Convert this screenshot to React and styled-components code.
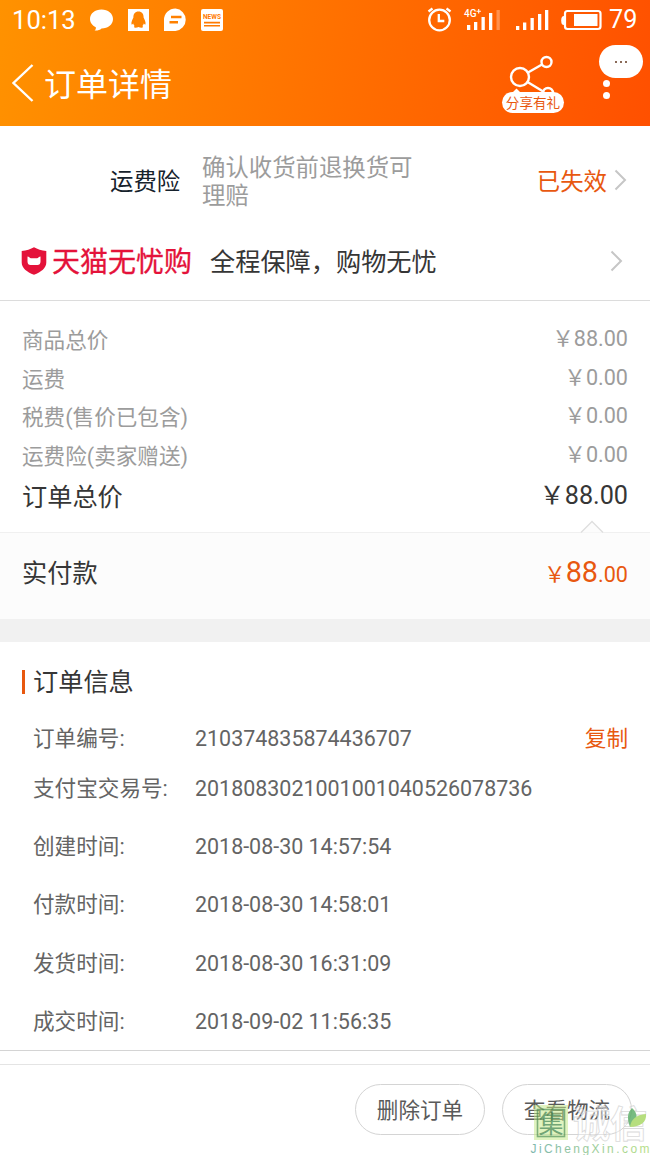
import React from "react"
import styled, {createGlobalStyle} from "styled-components"

const colors = {
	orange: "#e8580f",
	tmall: "#e4123a",
	dark: "#363636",
	text: "#646464",
	gray: "#9c9c9c",
	line: "#dcdcdc",
}

const prices = [
	{label: "商品总价", value: "￥88.00"},
	{label: "运费", value: "￥0.00"},
	{label: "税费(售价已包含)", value: "￥0.00"},
	{label: "运费险(卖家赠送)", value: "￥0.00"},
]

const orderInfo = [
	{label: "订单编号:", value: "210374835874436707", copy: true, height: 50},
	{label: "支付宝交易号:", value: "2018083021001001040526078736", height: 50, gap: 4},
	{label: "创建时间:", value: "2018-08-30 14:57:54"},
	{label: "付款时间:", value: "2018-08-30 14:58:01"},
	{label: "发货时间:", value: "2018-08-30 16:31:09"},
	{label: "成交时间:", value: "2018-09-02 11:56:35"},
]

const Chevron = () => (
	<svg width="13" height="22" viewBox="0 0 13 22" fill="none" stroke="#c6c6c6" strokeWidth="2">
		<path d="M1.500 1.500 11 11 1.500 20.500"/>
	</svg>
)

const NoticeIcons = () => (
	<svg width="136" height="26" viewBox="88 7 136 26" fill="#fff">
		<path d="M101.500 9.500c6.500 0 11.500 4 11.500 9.500s-5 9.500-11.500 9.500c-1.500 1.500-4 2.200-7 2 1.200-.8 1.600-2 1.300-3.300-3.500-1.600-5.800-4.700-5.800-8.200 0-5.500 5-9.500 11.500-9.500z"/>
		<path fillRule="evenodd" d="M128 9h21v22h-21zM138.500 11.500c-3.500 0-5.200 2.500-5.100 6-.8 2-2.400 4.400-1.900 7 .6.200 1.300-.3 1.700-1 .2 1 .7 1.800 1.400 2.500-1 .7-.6 1.800.8 1.800 1.200 0 2.300-.2 3.100-.8.800.6 1.900.8 3.100.8 1.400 0 1.800-1.100.8-1.800.7-.7 1.200-1.500 1.400-2.500.4.700 1.100 1.200 1.700 1 .5-2.600-1.100-5-1.900-7 .1-3.500-1.600-6-5.100-6z"/>
		<path fillRule="evenodd" d="M175.500 8.500A11.300 11.300 0 0 1 175.500 31H164V20A11.400 11.400 0 0 1 175.500 8.500zM171 15.700v2.600h10.500v-2.600zM169.500 21v2.600h8.500V21z"/>
		<rect x="201" y="9" width="22" height="22" rx="2"/>
		<path d="M204 21.800h16v1.600h-16zM204 25h16v1.600h-16z" fill="#ff7a00"/>
		<text x="212" y="18.500" textAnchor="middle" fontFamily="Roboto, sans-serif" fontSize="6.500" fontWeight="700" textLength="18" fill="#ff7a00">NEWS</text>
	</svg>
)

const DeviceIcons = () => (
	<svg width="178" height="28" viewBox="426 6 178 28" fill="#fff">
		<g fill="none" stroke="#fff" strokeWidth="2.300">
			<circle cx="439.500" cy="20" r="10.300"/>
			<path d="M438.800 14v7h5.500M428.500 11.500l4-3M450.500 11.500l-4-3"/>
		</g>
		<text x="464" y="17" fontFamily="Roboto, sans-serif" fontSize="10" fontWeight="500">4G</text>
		<path d="M478.700 9v4.400M476.500 11.200h4.400" stroke="#fff" strokeWidth="1.100"/>
		<path d="M467 25h3.300v5H467zM474 22h3.300v8H474zM481.500 17h3.300v13h-3.300zM489 13h3.300v17H489z"/>
		<path d="M496.500 10h3.300v20h-3.300z" opacity=".3"/>
		<path d="M516 26h3.300v4H516zM523 22.500h3.300v7.500H523zM530.500 18h3.300v12h-3.300zM538 14h3.300v16H538zM545 10h3.300v20H545z"/>
		<rect x="565" y="11" width="35.500" height="18" rx="2.500" fill="none" stroke="#fff" strokeWidth="2.200"/>
		<rect x="574" y="14" width="23.500" height="12"/>
		<path d="M564 16v9c-2 0-2.800-1.500-2.800-4.500S562 16 564 16z"/>
	</svg>
)

const ShareIcon = () => (
	<svg width="50" height="44" viewBox="505 52 50 44" fill="none" stroke="#fff" strokeWidth="2.400">
		<circle cx="520" cy="77" r="9"/>
		<circle cx="546.500" cy="62" r="5"/>
		<circle cx="548" cy="93" r="5"/>
		<path d="M528 72.500 542 64.500M527.500 82 544 92"/>
		<path d="M511 94 516.500 88.500 522 94z" fill="#fff" stroke="none"/>
	</svg>
)

const Shield = () => (
	<svg width="26" height="28" viewBox="0 0 26 28">
		<path d="M13 .3c3.400 2 7.500 3.200 12.300 3.600V15.500c0 5.500-5 9.500-12.300 12.200C5.700 25 .7 21 .7 15.500V3.900C5.500 3.500 9.600 2.300 13 .3z" fill={colors.tmall}/>
		<path d="M6.500 9.500c1.500 0 2.200 1.700 3.500 1.700h6c1.300 0 2-1.700 3.500-1.700v5c0 2.500-1.300 3.500-3 3.500h-7c-1.700 0-3-1-3-3.500z" fill="#fff"/>
	</svg>
)

const Watermark = () => (
	<Mark>
		<svg width="122" height="56" viewBox="528 1099 122 56">
			<defs>
				<linearGradient id="site" x1="0" x2="1">
					<stop offset="0" stopColor="#5fa79a"/>
					<stop offset="1" stopColor="#a5d86c"/>
				</linearGradient>
			</defs>
			<rect x="534" y="1105" width="34" height="35" fill="#c5ea86" opacity=".65"/>
			<rect x="537.500" y="1109.500" width="27" height="27" fill="none" stroke="#5f9c58" strokeWidth="1.600"/>
			<text x="551" y="1132.500" textAnchor="middle" fontFamily="'Noto Sans CJK SC', sans-serif" fontSize="25" fill="#4f8f55">集</text>
			<text x="573" y="1138" fontFamily="'Noto Sans CJK SC', sans-serif" fontSize="37" fontWeight="700" fill="#fff" fillOpacity=".5" stroke="#d2d2d2" strokeWidth=".8">诚信</text>
			<path d="M630 1127c-3-8-3-14 2-19 6 5 7 13-2 19z" fill="#56ab62"/>
			<path d="M630 1127c1-8 6-12 16-13 1 8-6 13-16 13z" fill="#a4d65e"/>
			<text x="530.500" y="1153" fontFamily="'Liberation Sans', sans-serif" fontSize="12" textLength="119" fill="url(#site)">JiChengXin.com</text>
		</svg>
	</Mark>
)

const App = () => (
	<Page>
		<GlobalStyle/>
		<Header>
			<StatusBar>
				<Clock>10:13</Clock>
				<NoticeIcons/>
				<Spacer/>
				<DeviceIcons/>
				<Battery>79</Battery>
			</StatusBar>
			<NavBar>
				<svg width="22" height="40" viewBox="0 0 22 40" fill="none" stroke="#fff" strokeWidth="2.400">
					<path d="M20.500 2 1.500 20 20.500 38"/>
				</svg>
				<Title>订单详情</Title>
				<Share>
					<ShareIcon/>
					<ShareLabel>分享有礼</ShareLabel>
				</Share>
				<More>
					<Bubble><i/><i/><i/></Bubble>
					<Dot/>
					<Dot/>
				</More>
			</NavBar>
		</Header>

		<Insurance>
			<InsuranceName>运费险</InsuranceName>
			<InsuranceNote>确认收货前退换货可理赔</InsuranceNote>
			<Expired>已失效</Expired>
			<Chevron/>
		</Insurance>
		<Guarantee>
			<Shield/>
			<Brand>天猫无忧购</Brand>
			<Slogan>全程保障，购物无忧</Slogan>
			<Chevron/>
		</Guarantee>

		<Prices>
			{prices.map(({label, value}) =>
				<PriceRow key={label}>
					<span>{label}</span>
					<Amount>{value}</Amount>
				</PriceRow>
			)}
			<TotalRow>
				<span>订单总价</span>
				<Amount>￥88.00</Amount>
			</TotalRow>
			<Notch width="24" height="13" viewBox="0 0 24 13">
				<path d="M1 12.500 12 1.500 23 12.500" fill="#fcfcfc" stroke="#dedede" strokeWidth="1.300"/>
			</Notch>
		</Prices>
		<Paid>
			<span>实付款</span>
			<PaidAmount>￥<b>88</b>.00</PaidAmount>
		</Paid>

		<Info>
			<InfoTitle>订单信息</InfoTitle>
			{orderInfo.map(({label, value, copy, height, gap}) =>
				<InfoRow key={label} $height={height} $gap={gap}>
					<InfoLabel>{label}</InfoLabel>
					<InfoValue>{value}</InfoValue>
					{copy && <Copy>复制</Copy>}
				</InfoRow>
			)}
		</Info>

		<Footer>
			<Button>删除订单</Button>
			<Button>查看物流</Button>
			<Watermark/>
		</Footer>
	</Page>
)
export default App

const GlobalStyle = createGlobalStyle`
	* {
		box-sizing: border-box;
	}

	body {
		margin: 0;
		background: #fff;
		font-family: Roboto, "Noto Sans CJK SC", sans-serif;
	}

	svg {
		display: block;
		flex: none;
	}
`
const Page = styled.div`
	display: flex;
	flex-direction: column;
	width: 650px;
	height: 1155px;
	overflow: hidden;
	color: ${colors.dark};
	font-size: 21.6px;
	line-height: 28px;
`
const Header = styled.header`
	flex: none;
	height: 126px;
	color: #fff;
	background: linear-gradient(100deg, #ff9200, #ff5000);
`
const StatusBar = styled.div`
	display: flex;
	align-items: center;
	height: 40px;
	padding: 0 13px 0 12px;
`
const Clock = styled.span`
	width: 76px;
	font-size: 25.6px;
`
const Spacer = styled.span`
	flex: 1;
`
const Battery = styled.span`
	width: 33px;
	padding-left: 5px;
	font-size: 25.2px;
`
const NavBar = styled.div`
	display: flex;
	align-items: center;
	height: 86px;
	padding: 0 7px 0 12px;
`
const Title = styled.h1`
	flex: 1;
	margin: 0 0 0 10px;
	padding-top: 4px;
	font-size: 32px;
	font-weight: 400;
`
const Share = styled.div`
	position: relative;
	width: 62px;
	height: 62px;
	margin-right: 35px;
	padding-left: 3px;
`
const ShareLabel = styled.span`
	position: absolute;
	left: 0;
	bottom: 1px;
	width: 62px;
	height: 21px;
	border-radius: 11px;
	background: #fff;
	color: ${colors.orange};
	font-size: 13.6px;
	line-height: 23px;
	text-align: center;
`
const More = styled.div`
	display: flex;
	flex-direction: column;
	align-items: flex-start;
	gap: 5px;
	height: 76px;
`
const Bubble = styled.div`
	display: flex;
	justify-content: center;
	align-items: center;
	gap: 3px;
	width: 44px;
	height: 33px;
	margin-bottom: -3px;
	border-radius: 17px;
	background: #fff;

	i {
		width: 2px;
		height: 2px;
		background: #8a6a58;
	}
`
const Dot = styled.i`
	width: 7px;
	height: 7px;
	margin-left: 4px;
	border-radius: 50%;
	background: #fff;
`
const Insurance = styled.section`
	display: flex;
	flex: none;
	align-items: center;
	height: 108px;
	padding: 0 23px 0 110px;
	font-size: 23.4px;
`
const InsuranceName = styled.span`
	width: 92px;
	padding-top: 3px;
	color: #16222c;
`
const InsuranceNote = styled.p`
	width: 216px;
	margin: 0 auto 0 0;
	padding-top: 4px;
	color: ${colors.gray};
`
const Expired = styled.span`
	margin-right: 7px;
	padding-top: 3px;
	color: ${colors.orange};
`
const Guarantee = styled.section`
	display: flex;
	flex: none;
	align-items: center;
	height: 67px;
	padding: 0 27px 12px 21px;
	border-bottom: 1px solid ${colors.line};
`
const Brand = styled.strong`
	width: 158px;
	margin-left: 5px;
	padding-top: 3px;
	color: ${colors.tmall};
	font-size: 28px;
	font-weight: 400;
	-webkit-text-stroke: .3px ${colors.tmall};
`
const Slogan = styled.span`
	flex: 1;
	padding-top: 4px;
	font-size: 25.2px;
`
const Prices = styled.section`
	position: relative;
	flex: none;
	height: 232px;
	padding: 21px 22px 0;
	border-bottom: 1px solid #f0f0f0;
`
const PriceRow = styled.div`
	display: flex;
	justify-content: space-between;
	align-items: center;
	height: 38.6px;
	color: ${colors.gray};
`
const Amount = styled.span`
	padding-bottom: 4px;
`
const TotalRow = styled(PriceRow)`
	height: 43px;
	color: ${colors.dark};
	font-size: 25.2px;
`
const Notch = styled.svg`
	position: absolute;
	right: 46px;
	bottom: -1px;
`
const Paid = styled.section`
	display: flex;
	flex: none;
	justify-content: space-between;
	align-items: center;
	height: 109px;
	padding: 0 22px 4px;
	border-bottom: 23px solid #f1f1f1;
	background: #fcfcfc;
	font-size: 25.2px;
`
const PaidAmount = styled.span`
	padding-bottom: 1px;
	color: ${colors.orange};
	font-size: 21.6px;

	b {
		font-size: 28.8px;
		font-weight: 400;
	}
`
const Info = styled.section`
	flex: none;
	height: 409px;
	padding: 26px 22px 0;
	border-bottom: 1px solid #d4d4d4;
`
const InfoTitle = styled.h2`
	display: flex;
	align-items: center;
	height: 30px;
	margin: 0 0 16px;
	font-size: 25.2px;
	font-weight: 400;

	&:before {
		content: "";
		width: 3px;
		height: 24px;
		margin: -3px 8px 0 0;
		background: ${colors.orange};
	}
`
const InfoRow = styled.div`
	display: flex;
	align-items: center;
	height: ${props => props.$height || 58.3}px;
	margin-bottom: ${props => props.$gap || 0}px;
	padding-left: 11px;
	color: ${colors.text};
`
const InfoLabel = styled.span`
	width: 162px;
`
const InfoValue = styled.span`
	font-size: 21.45px;
`
const Copy = styled.span`
	margin-left: auto;
	color: ${colors.orange};
`
const Footer = styled.footer`
	position: relative;
	display: flex;
	flex: none;
	justify-content: flex-end;
	gap: 17px;
	height: 91px;
	margin-top: 13px;
	padding: 19px 18px 0;
	border-top: 1px solid #e4e4e4;
`
const Button = styled.button`
	width: 130px;
	height: 51px;
	padding: 3px 0 0;
	border: 1px solid #d4d4d4;
	border-radius: 26px;
	background: #fff;
	color: #5a5a5a;
	font: inherit;
`
const Mark = styled.div`
	position: absolute;
	right: 0;
	bottom: 0;
	opacity: .8;
	pointer-events: none;
`
